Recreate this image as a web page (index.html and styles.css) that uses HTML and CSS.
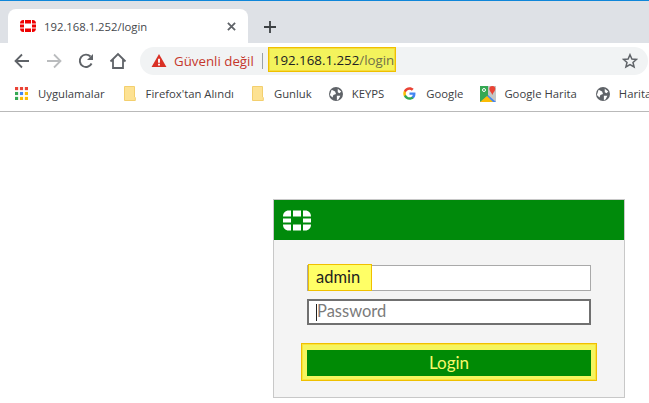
FILE: index.html
```html
<!DOCTYPE html>
<html lang="tr">
<head>
<meta charset="utf-8">
<title>192.168.1.252/login</title>
<link rel="stylesheet" href="styles.css">
</head>
<body>
<header class="chrome">
  <div class="tabstrip">
    <div class="tab">
      <svg class="favicon" viewBox="0 0 16 12" width="16" height="12">
        <g fill="#ee0000">
          <path d="M0 3.4C0 1.5 1.2 0 3.2 0H4v3.4zM5 0h6v3.4H5zM12 0h.8C14.8 0 16 1.5 16 3.4H12zM0 4.4h4v3.2H0zM12 4.4h4v3.2h-4zM0 8.6h4V12h-.8C1.2 12 0 10.5 0 8.6zM5 8.6h6V12H5zM12 8.6h4c0 1.900-1.200 3.400-3.200 3.400H12z"/>
        </g>
      </svg>
      <span class="tab-title">192.168.1.252/login</span>
      <svg class="tab-close" viewBox="0 0 10 10" width="9" height="9"><path d="M1 1l8 8M9 1l-8 8" stroke="#5f6368" stroke-width="2" fill="none"/></svg>
    </div>
    <svg class="newtab" viewBox="0 0 12 12" width="12" height="12"><path d="M6 0v12M0 6h12" stroke="#3c4043" stroke-width="1.800" fill="none"/></svg>
  </div>
  <div class="toolbar">
    <svg class="nav back" viewBox="0 0 16 16" width="16" height="16"><path d="M15 8H2M8 1.500L1.500 8 8 14.500" stroke="#5f6368" stroke-width="1.800" fill="none"/></svg>
    <svg class="nav fwd" viewBox="0 0 16 16" width="16" height="16"><path d="M1 8h13M8 1.500L14.500 8 8 14.500" stroke="#babcbe" stroke-width="1.800" fill="none"/></svg>
    <svg class="nav reload" viewBox="0 0 16 16" width="16" height="16"><path d="M13.600 10.500A6.200 6.200 0 1 1 12.500 3.500" stroke="#5f6368" stroke-width="1.900" fill="none"/><path d="M15 1v6H9z" fill="#5f6368"/></svg>
    <svg class="nav home" viewBox="0 0 18 18" width="18" height="18"><path d="M1.500 9.500L9 2l7.500 7.500M4 7.500V16h10V7.500" stroke="#5f6368" stroke-width="1.800" fill="none"/></svg>
    <div class="omnibox">
      <svg class="warn" viewBox="0 0 16 14" width="16" height="13"><path d="M8 0l8 14H0z" fill="#d93025"/><path d="M7 5h2v4.500H7zM7 10.500h2v2H7z" fill="#fff"/></svg>
      <span class="warn-text">Güvenli değil</span>
      <span class="divider"></span>
      <span class="url"><span class="host">192.168.1.252</span><span class="path">/login</span></span>
      <svg class="star" viewBox="0 0 16 16" width="16" height="16"><path d="M8 1.700l1.900 4.300 4.600.4-3.500 3 1.100 4.600L8 11.600 3.900 14l1.100-4.600-3.500-3 4.600-.4z" stroke="#5f6368" stroke-width="1.500" fill="none"/></svg>
    </div>
  </div>
  <nav class="bookmarks">
    <a class="bm bm-apps">
      <svg viewBox="0 0 14 14" width="13" height="13">
        <rect x="0" y="0" width="3.400" height="3.400" fill="#ea4335"/><rect x="5.300" y="0" width="3.400" height="3.400" fill="#ea4335"/><rect x="10.600" y="0" width="3.400" height="3.400" fill="#ea4335"/>
        <rect x="0" y="5.300" width="3.400" height="3.400" fill="#34a853"/><rect x="5.300" y="5.300" width="3.400" height="3.400" fill="#4285f4"/><rect x="10.600" y="5.300" width="3.400" height="3.400" fill="#fbbc05"/>
        <rect x="0" y="10.600" width="3.400" height="3.400" fill="#34a853"/><rect x="5.300" y="10.600" width="3.400" height="3.400" fill="#fbbc05"/><rect x="10.600" y="10.600" width="3.400" height="3.400" fill="#fbbc05"/>
      </svg>
      <span>Uygulamalar</span>
    </a>
    <a class="bm bm-firefox">
      <svg viewBox="0 0 12 15" width="12" height="15"><path d="M.5.500h10v10.500l.800.500v3H.500z" fill="#fde293" stroke="#f3cf6e"/></svg>
      <span>Firefox'tan Alındı</span>
    </a>
    <a class="bm bm-gunluk">
      <svg viewBox="0 0 12 15" width="12" height="15"><path d="M.5.500h10v10.500l.800.500v3H.500z" fill="#fde293" stroke="#f3cf6e"/></svg>
      <span>Gunluk</span>
    </a>
    <a class="bm bm-keyps">
      <svg viewBox="0 0 16 16" width="14" height="14"><circle cx="8" cy="8" r="8" fill="#5f6368"/><path d="M3 3l4 2 1 3-3 1-1 3-3-3zM10 2l4 3-2 2-2-1zM9 10h4l-2 4-2 1z" fill="#fff"/></svg>
      <span>KEYPS</span>
    </a>
    <a class="bm bm-google">
      <svg viewBox="0 0 48 48" width="13" height="13">
        <path fill="#4285f4" d="M46 24.500c0-1.600-.1-3.100-.4-4.500H24v9h12.400c-.5 2.800-2.200 5.300-4.600 6.900v5.700h7.400C43.600 37.600 46 31.600 46 24.500z"/>
        <path fill="#34a853" d="M24 47c6.200 0 11.400-2 15.200-5.500l-7.400-5.700c-2 1.400-4.700 2.200-7.800 2.200-6 0-11.100-4-12.900-9.500H3.500v5.900C7.300 41.900 15 47 24 47z"/>
        <path fill="#fbbc05" d="M11.100 28.500c-.5-1.400-.7-2.900-.7-4.500s.3-3.100.7-4.500v-5.900H3.500C2 16.700 1 20.200 1 24s1 7.300 2.500 10.400z"/>
        <path fill="#ea4335" d="M24 10c3.400 0 6.400 1.200 8.800 3.400l6.600-6.600C35.400 3.100 30.200 1 24 1 15 1 7.300 6.100 3.500 13.600l7.600 5.900C12.900 14 18 10 24 10z"/>
      </svg>
      <span>Google</span>
    </a>
    <a class="bm bm-maps">
      <svg viewBox="0 0 16 16" width="16" height="16">
        <rect width="16" height="16" fill="#34a853"/>
        <path d="M0 16L16 3v13z" fill="#4285f4"/>
        <path d="M0 16l7-6 6 6z" fill="#fbbc05"/>
        <path d="M8 0h8v16L8 9z" fill="#c4c7c5"/>
        <path d="M12.300 0a3 3 0 0 1 3 3c0 2-2 3-3 6-1-3-3-4-3-6a3 3 0 0 1 3-3z" fill="#ea4335"/>
        <circle cx="4" cy="4" r="1.500" fill="none" stroke="#fff"/>
      </svg>
      <span>Google Harita</span>
    </a>
    <a class="bm bm-harita">
      <svg viewBox="0 0 16 16" width="14" height="14"><circle cx="8" cy="8" r="8" fill="#5f6368"/><path d="M3 3l4 2 1 3-3 1-1 3-3-3zM10 2l4 3-2 2-2-1zM9 10h4l-2 4-2 1z" fill="#fff"/></svg>
      <span>Harita</span>
    </a>
  </nav>
</header>
<main class="page">
  <section class="card">
    <div class="card-head">
      <svg class="logo" viewBox="0 0 28 20" width="28" height="21">
        <g fill="#fff">
          <path d="M0 6C0 2.500 2.300 0 5.700 0H8v6zM10 0h8v6h-8zM20 0h2.300C25.700 0 28 2.500 28 6H20zM0 8h8v4H0zM20 8h8v4h-8zM0 14h8v6H5.700C2.300 20 0 17.500 0 14zM10 14h8v6h-8zM20 14h8c0 3.500-2.300 6-5.700 6H20z"/>
        </g>
      </svg>
    </div>
    <form class="card-body">
      <div class="field field-user"><span class="hl">admin</span></div>
      <div class="field field-pass"><span class="caret"></span><span class="placeholder">Password</span></div>
      <div class="login-ring"><button class="login" type="button">Login</button></div>
    </form>
  </section>
</main>
</body>
</html>
```

FILE: styles.css
```css
* { box-sizing: border-box; }
html, body { margin: 0; padding: 0; }
body {
  width: 649px;
  height: 403px;
  overflow: hidden;
  background: #fff;
  font-family: "Open Sans", "Noto Sans", sans-serif;
  color: #3c4043;
}
.chrome { border-bottom: 1px solid #b9b9b9; height: 112px; }
.tabstrip {
  height: 43px;
  background: #dee1e6;
  border-top: 1px solid #0f86d9;
  padding: 8px 0 0 8px;
  display: flex;
  align-items: flex-start;
}
.tab {
  width: 240px;
  height: 34px;
  background: #fff;
  border-radius: 8px 8px 0 0;
  display: flex;
  align-items: center;
  padding: 0 12px 0 12px;
}
.favicon { flex: none; }
.tab-title { font-size: 11.3px; margin-left: 8px; flex: 1; white-space: nowrap; color: #45484c; }
.tab-close { flex: none; }
.newtab { margin: 12px 0 0 16px; }
.toolbar {
  height: 35px;
  display: flex;
  align-items: center;
  padding: 0 1px 0 14px;
}
.nav { flex: none; }
.fwd { margin-left: 16px; }
.reload { margin-left: 16px; }
.home { margin-left: 15px; }
.omnibox {
  flex: 1;
  height: 28px;
  margin-left: 13px;
  border-radius: 14px;
  background: #f1f3f4;
  display: flex;
  align-items: center;
  padding: 0 10px 0 11px;
}
.warn { flex: none; }
.warn-text { font-size: 13.3px; color: #c5372c; margin-left: 7px; white-space: nowrap; }
.divider { width: 1px; height: 16px; background: #9aa0a6; margin-left: 8px; }
.url {
  margin-left: 5px;
  align-self: flex-start;
  height: 25px;
  background: #f3f35c;
  border: 1px solid #efc000;
  box-shadow: inset 0 0 0 1px #f6dd3c;
  font-size: 13.3px;
  line-height: 25px;
  padding: 0 1px 0 4px;
  white-space: nowrap;
}
.host { color: #202124; }
.path { color: #70704a; }
.star { margin-left: auto; }
.bookmarks {
  height: 33px;
  display: flex;
  align-items: center;
  padding: 0 0 2px 15px;
  white-space: nowrap;
  overflow: hidden;
  font-size: 11.3px;
  color: #3c4043;
}
.bm { display: flex; align-items: center; flex: none; }
.bm-apps span { margin-left: 10px; }
.bm-firefox { margin-left: 19px; }
.bm-firefox span { margin-left: 10px; }
.bm-gunluk { margin-left: 18px; }
.bm-gunluk span { margin-left: 10px; }
.bm-keyps { margin-left: 17px; }
.bm-keyps span { margin-left: 9px; }
.bm-google { margin-left: 19px; }
.bm-google span { margin-left: 10px; }
.bm-maps { margin-left: 17px; }
.bm-maps span { margin-left: 8px; }
.bm-harita { margin-left: 19px; }
.bm-harita span { margin-left: 9px; }
.page { padding: 87px 0 0 273px; }
.card {
  width: 352px;
  height: 199px;
  border: 1px solid #c8c8c8;
  background: #f4f4f4;
}
.card-head {
  height: 40px;
  background: #008a0b;
  display: flex;
  align-items: center;
  padding-left: 9px;
}
.card-body {
  padding: 25px 33px 0 33px;
  display: flex;
  flex-direction: column;
}
.field {
  height: 26px;
  width: 284px;
  background: #fff;
  font-family: "Lato", sans-serif;
  display: flex;
  align-items: stretch;
}
.field-user { border: 1px solid #a9a9a9; }
.hl {
  width: 64px;
  margin: -2px 0 -1px;
  background: #ffff66;
  border: 1px solid #f0c000;
  padding-left: 7px;
  line-height: 25px;
  color: #1e1e1e;
  font-size: 16.5px;
}
.field-pass {
  margin-top: 8px;
  border: 2px solid #707070;
  padding-left: 7px;
  align-items: center;
  color: #7b7b7b;
  font-size: 16.5px;
}
.caret { width: 1px; height: 17px; background: #222; }
.placeholder { line-height: 20px; margin-top: -2px; }
.login-ring {
  margin: 18px 0 0 -6px;
  width: 296px;
  height: 38px;
  border: 1px solid #efc000;
  background: #f5f55f;
  padding: 6px 5px 0;
  box-shadow: inset 0 0 0 1px #fbe33a;
}
.login {
  display: block;
  width: 284px;
  height: 26px;
  border: 0;
  padding: 0 0 2px;
  background: #008a05;
  color: #f8f86a;
  font-family: "Lato", sans-serif;
  font-size: 17px;
}
```
